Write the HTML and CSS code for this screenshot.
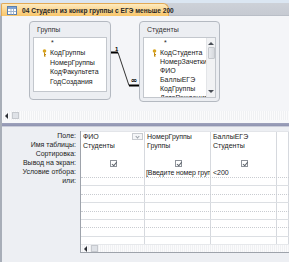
FILE: index.html
```html
<!DOCTYPE html>
<html lang="ru">
<head>
  <meta charset="utf-8">
  <title>04 Студент из конкр группы с ЕГЭ меньше 200</title>
  <link rel="stylesheet" href="styles.css">
</head>
<body>
  <div class="window">
    <div class="tabs">
      <div class="tab">
        <svg class="tab-icon" width="10" height="9" viewBox="0 0 10 9">
          <rect x="0.5" y="0.5" width="9" height="8" fill="#fff" stroke="#5b7fae"/>
          <rect x="1" y="1" width="8" height="2" fill="#7fa3d3"/>
          <path d="M1 5.5h8M4 3v5.5M6.5 3v5.5" stroke="#9fb4cf" stroke-width="1"/>
        </svg>
        <span class="tab-title">04 Студент из конкр группы с ЕГЭ меньше 200</span>
      </div>
    </div>

    <div class="diagram">
      <div class="canvas">
        <div class="tbl groups">
          <div class="tbl-title">Группы</div>
          <ul class="fields">
            <li class="star">*</li>
            <li class="pk"><svg class="key" width="5" height="8" viewBox="0 0 5 8"><circle cx="2.5" cy="2" r="1.8" fill="#d9a520"/><path d="M2.5 3.5v4M2.5 5.5h1.5M2.5 7h1.2" stroke="#c28a10" stroke-width="1"/></svg>КодГруппы</li>
            <li>НомерГруппы</li>
            <li>КодФакультета</li>
            <li>ГодСоздания</li>
          </ul>
        </div>

        <svg class="rel" width="30" height="40" viewBox="0 0 30 40">
          <path d="M0 2.5h7" stroke="#000" stroke-width="2"/>
          <path d="M7 2.5L18 35.5" stroke="#333" stroke-width="1"/>
          <path d="M18 35.5h11" stroke="#000" stroke-width="2"/>
          <text x="4" y="0.5" class="rel-one">1</text>
          <text x="19.5" y="33" class="rel-many">∞</text>
        </svg>

        <div class="tbl students">
          <div class="tbl-title">Студенты</div>
          <div class="list-wrap">
            <ul class="fields">
              <li class="star">*</li>
              <li class="pk"><svg class="key" width="5" height="8" viewBox="0 0 5 8"><circle cx="2.5" cy="2" r="1.8" fill="#d9a520"/><path d="M2.5 3.5v4M2.5 5.5h1.5M2.5 7h1.2" stroke="#c28a10" stroke-width="1"/></svg>КодСтудента</li>
              <li>НомерЗачетки</li>
              <li>ФИО</li>
              <li>БаллыЕГЭ</li>
              <li>КодГруппы</li>
              <li>ДатаРождения</li>
            </ul>
            <div class="vscroll">
              <span class="arrow up"></span>
              <span class="thumb"></span>
              <span class="arrow down"></span>
            </div>
          </div>
        </div>
      </div>
      <div class="hscroll">
        <span class="arrow left"></span>
        <span class="thumb"></span>
      </div>
    </div>

    <div class="splitter"></div>

    <div class="design">
      <div class="labels">
        <div class="label">Поле:</div>
        <div class="label">Имя таблицы:</div>
        <div class="label">Сортировка:</div>
        <div class="label">Вывод на экран:</div>
        <div class="label">Условие отбора:</div>
        <div class="label">или:</div>
      </div>
      <div class="grid-wrap">
        <div class="grid">
          <div class="row">
            <div class="cell field">ФИО<span class="drop"></span></div>
            <div class="cell">НомерГруппы</div>
            <div class="cell">БаллыЕГЭ</div>
            <div class="cell"></div>
          </div>
          <div class="row">
            <div class="cell">Студенты</div>
            <div class="cell">Группы</div>
            <div class="cell">Студенты</div>
            <div class="cell"></div>
          </div>
          <div class="row">
            <div class="cell"></div><div class="cell"></div><div class="cell"></div><div class="cell"></div>
          </div>
          <div class="row">
            <div class="cell check"><span class="box"></span></div>
            <div class="cell check"><span class="box"></span></div>
            <div class="cell check"><span class="box"></span></div>
            <div class="cell"></div>
          </div>
          <div class="row">
            <div class="cell"></div>
            <div class="cell criteria">[Введите номер груп</div>
            <div class="cell">&lt;200</div>
            <div class="cell"></div>
          </div>
          <div class="row extra dotted"><div class="cell"></div><div class="cell"></div><div class="cell"></div><div class="cell"></div></div>
          <div class="row extra"><div class="cell"></div><div class="cell"></div><div class="cell"></div><div class="cell"></div></div>
          <div class="row extra dotted"><div class="cell"></div><div class="cell"></div><div class="cell"></div><div class="cell"></div></div>
          <div class="row extra"><div class="cell"></div><div class="cell"></div><div class="cell"></div><div class="cell"></div></div>
          <div class="row extra dotted"><div class="cell"></div><div class="cell"></div><div class="cell"></div><div class="cell"></div></div>
          <div class="row extra"><div class="cell"></div><div class="cell"></div><div class="cell"></div><div class="cell"></div></div>
          <div class="row extra dotted"><div class="cell"></div><div class="cell"></div><div class="cell"></div><div class="cell"></div></div>
          <div class="row extra"><div class="cell"></div><div class="cell"></div><div class="cell"></div><div class="cell"></div></div>
        </div>
        <div class="hscroll grid-scroll">
          <span class="arrow left"></span>
          <span class="thumb"></span>
        </div>
      </div>
    </div>
  </div>
</body>
</html>
```

FILE: styles.css
```css
* {
  box-sizing: border-box;
  margin: 0;
  padding: 0
}

html,
body {
  width: 289px;
  height: 262px;
  overflow: hidden
}

body {
  font-family: 'Liberation Sans', Arial, sans-serif;
  font-size: 7px;
  color: #1b1b1b;
  background: #cfd5de
}

.window {
  width: 289px;
  height: 262px;
  display: flex;
  flex-direction: column
}

/* tab strip */
.tabs {
  height: 16px;
  flex-shrink: 0;
  display: flex;
  align-items: flex-end;
  padding-left: 1px;
  background: linear-gradient(#dbe6f2 0, #dbe6f2 3px, #cdd1d8 3px, #c6cad2 100%);
  border-bottom: 1px solid #b9bec7
}

.tab {
  height: 13px;
  width: 168px;
  display: flex;
  align-items: center;
  gap: 5px;
  padding-left: 5px;
  background: linear-gradient(#fdebc0, #fbd58e 55%, #f7c56a);
  border: 1px solid #e2a955;
  border-bottom: none;
  border-radius: 2px 6px 0 0;
  margin-bottom: -1px
}

.tab-icon {
  flex-shrink: 0
}

.tab-title {
  font-weight: bold;
  font-size: 6.6px;
  color: #262626;
  white-space: nowrap
}

/* relationship diagram */
.diagram {
  height: 104px;
  flex-shrink: 0;
  display: flex;
  flex-direction: column;
  background: #f4f5f8;
  border-left: 2px solid #a8aeb8
}

.canvas {
  position: relative;
  flex: 1;
  overflow: hidden
}

.tbl {
  position: absolute;
  top: 5px;
  background: #eceef2;
  border: 1px solid #b4b9c1;
  border-radius: 4px;
  padding: 0 3px 7px 3px;
  display: flex;
  flex-direction: column
}

.groups {
  left: 27px;
  width: 82px;
  height: 79px
}

.students {
  left: 137px;
  width: 81px;
  height: 81px;
  padding-bottom: 3px
}

.tbl-title {
  height: 15px;
  line-height: 16px;
  padding-left: 4px;
  color: #333
}

.fields {
  list-style: none;
  flex: 1;
  background: #fff;
  border: 1px solid #c3c7cd;
  overflow: hidden
}

.fields li {
  height: 9.8px;
  line-height: 9.8px;
  padding-left: 16px;
  white-space: nowrap;
  position: relative
}

.students .fields li {
  height: 9px;
  line-height: 9px
}

.students .fields li:first-child {
  height: 10px
}

.fields .star {
  padding-left: 17px
}

.students .fields .star {
  padding-left: 20px
}

.key {
  position: absolute;
  left: 8px;
  top: 1px
}

.list-wrap {
  flex: 1;
  display: flex;
  min-height: 0;
  background: #fff;
  border: 1px solid #c3c7cd
}

.list-wrap .fields {
  border: none
}

.vscroll {
  width: 9px;
  flex-shrink: 0;
  display: flex;
  flex-direction: column;
  align-items: center;
  background: #f1f2f4;
  border-left: 1px solid #e3e5e8;
  padding: 2px 0
}

.vscroll .thumb {
  width: 7px;
  height: 12px;
  margin-top: 2px;
  background: linear-gradient(90deg, #e8eaee, #d6d9de);
  border: 1px solid #c5c8cd;
  border-radius: 1px
}

.arrow {
  width: 0;
  height: 0;
  border: 3px solid transparent
}

.arrow.up {
  border-top: none;
  border-bottom: 3px solid #4a4f57;
  margin-top: 2px
}

.arrow.down {
  border-bottom: none;
  border-top: 3px solid #4a4f57;
  margin-top: auto;
  margin-bottom: 2px
}

.rel {
  position: absolute;
  left: 109px;
  top: 34px;
  overflow: visible
}

.rel-one {
  font: bold 6px 'Liberation Sans', sans-serif;
  fill: #000
}

.rel-many {
  font: bold 8px 'DejaVu Sans', sans-serif;
  fill: #000
}

/* scrollbars */
.hscroll {
  height: 9px;
  flex-shrink: 0;
  display: flex;
  align-items: center;
  gap: 4px;
  padding-left: 3px;
  background: repeating-linear-gradient(90deg, #fbfbfc 0 1px, #f0f1f3 1px 2px)
}

.arrow.left {
  border-left: none;
  border-right: 3px solid #2c2f35
}

.hscroll .thumb {
  width: 7px;
  height: 7px;
  background: #dfe2e7;
  border: 1px solid #c6c9ce
}

.splitter {
  height: 7px;
  flex-shrink: 0;
  background: linear-gradient(#f7f8fa 0, #f7f8fa 3px, #9fa3bd 3px, #8f94b1 6px, #c9ccd9 6px);
  border-left: 2px solid #a8aeb8
}

/* query design grid */
.design {
  flex: 1;
  display: flex;
  padding-top: 4px;
  padding-bottom: 11px;
  background: #edeff3;
  border-left: 2px solid #a8aeb8
}

.labels {
  width: 78px;
  flex-shrink: 0;
  padding-right: 4px
}

.label {
  height: 9px;
  line-height: 9px;
  text-align: right;
  white-space: nowrap
}

.grid-wrap {
  flex: 1;
  display: flex;
  flex-direction: column;
  border-left: 1px solid #9ea3ab;
  border-bottom: 1px solid #9ea3ab;
  background: #fff;
  min-width: 0
}

.grid {
  flex: 1;
  display: flex;
  flex-direction: column;
  border-top: 1px solid #e3e5e9
}

.row {
  height: 9px;
  display: grid;
  grid-template-columns: 64px 66px 66px 1fr
}

.row.extra {
  height: 8.375px;
  border-top: 1px solid #dcdfe3
}

.row.extra.dotted {
  border-top: 1px dotted #c9ccd1
}

.cell {
  border-right: 1px solid #d6d9de;
  padding-left: 2px;
  line-height: 9px;
  white-space: nowrap;
  overflow: hidden;
  position: relative
}

.criteria {
  padding-left: 1px;
  letter-spacing: -0.1px
}

.row.extra .cell {
  line-height: 8px
}

.drop {
  position: absolute;
  right: 1px;
  top: 1px;
  width: 11px;
  height: 7px;
  border: 1px solid #c8cbd0;
  background: #f5f6f8
}

.drop::after {
  content: '';
  position: absolute;
  left: 3px;
  top: 1px;
  width: 2px;
  height: 2px;
  border-right: 1px solid #9aa0a8;
  border-bottom: 1px solid #9aa0a8;
  transform: rotate(45deg)
}

.check {
  display: flex;
  align-items: center;
  justify-content: center
}

.box {
  width: 7px;
  height: 7px;
  border: 1px solid #8e939a;
  background: #fff;
  position: relative
}

.box::after {
  content: '';
  position: absolute;
  left: 1.5px;
  top: 0;
  width: 2px;
  height: 3.5px;
  border-right: 1px solid #5d636b;
  border-bottom: 1px solid #5d636b;
  transform: rotate(40deg)
}

.grid-scroll {
  height: 8px;
  border-top: 1px solid #e6e8eb
}
```
